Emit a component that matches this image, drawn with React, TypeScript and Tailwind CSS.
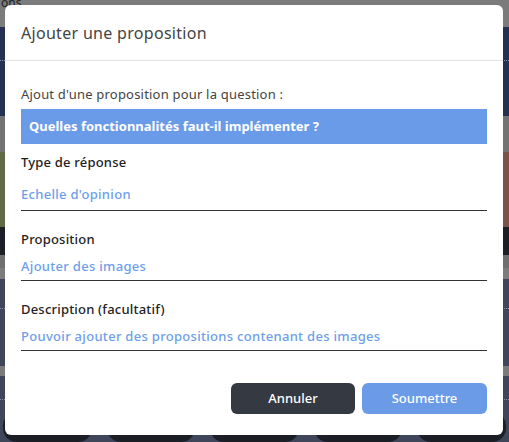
import React from "react";

const Field = ({ label, value, first }: { label: string; value: string; first?: boolean }) => (
  <div className="flex flex-col">
    <label className="text-[13px] font-medium text-[#222] leading-[18px] tracking-[0.2px]">{label}</label>
    <div
      className={
        (first ? "mt-[14px] pb-[7px] " : "mt-[9px] pb-[5px] ") +
        "border-b border-[#333] text-[13px] font-medium text-[#6d9eeb] leading-[18px] tracking-[0.3px]"
      }
    >
      {value}
    </div>
  </div>
);

const Backdrop = () => (
  <div className="flex flex-col w-full h-full">
    <div className="h-[31px] bg-[#7b7b7b] text-[12px] text-[#222] leading-[12px] -mt-[3px] pl-[1px]">ons</div>
    <div className="h-[94px] bg-[#243152] relative">
      <div className="absolute left-0 right-0 top-[33px] border-t border-dotted border-[#8a94ad]" />
    </div>
    <div className="h-[38px] bg-[#737373]" />
    <div className="h-[78px] flex">
      <div className="flex-1 bg-[#5e6a44]" />
      <div className="flex-1 bg-[#7b5349]" />
    </div>
    <div className="h-[30px] bg-[#1c2026]" />
    <div className="h-[14px] bg-[#6f6f6f]" />
    <div className="h-[11px] bg-[#7c7c7c]" />
    <div className="h-[92px] bg-[#3f4659] relative">
      <div className="absolute left-0 right-0 top-[29px] border-t border-dotted border-[#8a90a0]" />
    </div>
    <div className="h-[10px] bg-[#7a7a7a]" />
    <div className="flex-1 bg-[#3f4659] flex flex-col">
      <div className="h-[24px] border-b border-dotted border-[#8a90a0]" />
      <div className="flex gap-[15px] px-[3px] mt-[12px]">
        {[0, 1, 2, 3, 4].map((i) => (
          <div key={i} className="flex-1 h-[30px] rounded-[14px] bg-[#1b1e24]" />
        ))}
      </div>
    </div>
  </div>
);

export default function App() {
  return (
    <div
      className="relative w-[509px] h-[442px] overflow-hidden"
      style={{ fontFamily: "'Noto Sans', 'DejaVu Sans', sans-serif" }}
    >
      <Backdrop />
      <div className="absolute left-[5px] top-[5px] w-[498px] h-[430px] bg-white rounded-[6px] flex flex-col">
        <div className="h-[56px] flex items-center px-[16px] border-b border-[#e2e2e2]">
          <h2 className="text-[16px] text-[#444] font-normal tracking-[0.3px]">Ajouter une proposition</h2>
        </div>
        <div className="flex flex-col px-[16px] pt-[24px]">
          <p className="text-[13px] text-[#444] leading-[18px] tracking-[0.2px]">
            Ajout d'une proposition pour la question :
          </p>
          <div className="mt-[6px] h-[35px] bg-[#6a9be8] flex items-center px-[8px] text-[13px] font-bold text-white">
            Quelles fonctionnalités faut-il implémenter ?
          </div>
          <div className="flex flex-col gap-[19px] mt-[9px]">
            <Field label="Type de réponse" value="Echelle d'opinion" first />
            <Field label="Proposition" value="Ajouter des images" />
            <Field label="Description (facultatif)" value="Pouvoir ajouter des propositions contenant des images" />
          </div>
          <div className="flex justify-end gap-[7px] mt-[32px]">
            <button className="w-[124px] h-[31px] rounded-[6px] bg-[#353a42] text-white text-[13px] font-medium">
              Annuler
            </button>
            <button className="w-[125px] h-[31px] rounded-[6px] bg-[#6b9be7] text-white text-[13px] font-medium">
              Soumettre
            </button>
          </div>
        </div>
      </div>
    </div>
  );
}
